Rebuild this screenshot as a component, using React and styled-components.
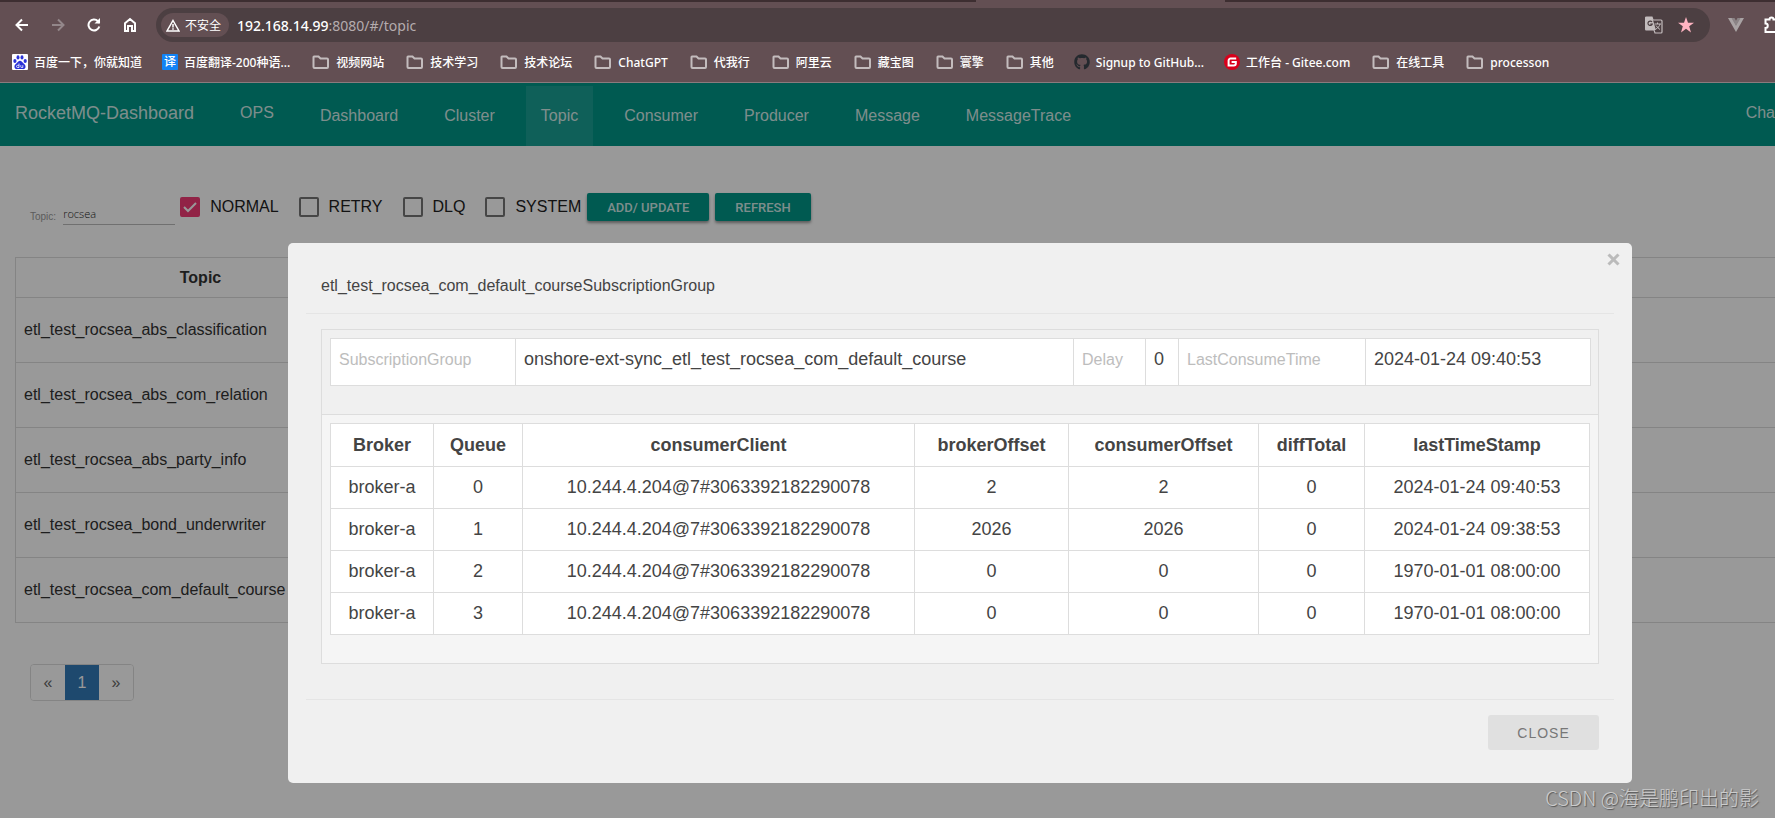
import React, { useState } from 'react';
import styled, { createGlobalStyle } from 'styled-components';
import { FaGithub } from 'react-icons/fa';

const bookmarks = [
  { label: '百度一下，你就知道', icon: 'baidu' },
  { label: '百度翻译-200种语...', icon: 'fanyi' },
  { label: '视频网站', icon: 'folder' },
  { label: '技术学习', icon: 'folder' },
  { label: '技术论坛', icon: 'folder' },
  { label: 'ChatGPT', icon: 'folder' },
  { label: '代我行', icon: 'folder' },
  { label: '阿里云', icon: 'folder' },
  { label: '藏宝图', icon: 'folder' },
  { label: '寰擎', icon: 'folder' },
  { label: '其他', icon: 'folder' },
  { label: 'Signup to GitHub...', icon: 'github' },
  { label: '工作台 - Gitee.com', icon: 'gitee' },
  { label: '在线工具', icon: 'folder' },
  { label: 'processon', icon: 'folder' },
];

const navItems = ['Dashboard', 'Cluster', 'Topic', 'Consumer', 'Producer', 'Message', 'MessageTrace'];

const filterNames = ['NORMAL', 'RETRY', 'DLQ', 'SYSTEM'];

const topics = [
  'etl_test_rocsea_abs_classification',
  'etl_test_rocsea_abs_com_relation',
  'etl_test_rocsea_abs_party_info',
  'etl_test_rocsea_bond_underwriter',
  'etl_test_rocsea_com_default_course',
];

const columns = [
  { name: 'Broker', width: 103 },
  { name: 'Queue', width: 89 },
  { name: 'consumerClient', width: 392 },
  { name: 'brokerOffset', width: 154 },
  { name: 'consumerOffset', width: 190 },
  { name: 'diffTotal', width: 106 },
  { name: 'lastTimeStamp', width: 225 },
];

const queues = [
  ['broker-a', '0', '10.244.4.204@7#3063392182290078', '2', '2', '0', '2024-01-24 09:40:53'],
  ['broker-a', '1', '10.244.4.204@7#3063392182290078', '2026', '2026', '0', '2024-01-24 09:38:53'],
  ['broker-a', '2', '10.244.4.204@7#3063392182290078', '0', '0', '0', '1970-01-01 08:00:00'],
  ['broker-a', '3', '10.244.4.204@7#3063392182290078', '0', '0', '0', '1970-01-01 08:00:00'],
];

const BookmarkIcon = ({ type }) => {
  if (type === 'folder') {
    return (
      <svg width="20" height="16" viewBox="0 0 20 16" fill="none" stroke="#c3bcbd" strokeWidth="2">
        <path d="M4 2.5h4.5l2 2H17a1 1 0 0 1 1 1V13a1 1 0 0 1-1 1H4.500a1 1 0 0 1-1-1V3a.5.5 0 0 1 .5-.5z" />
      </svg>
    );
  }
  if (type === 'baidu') {
    return (
      <svg width="16" height="16" viewBox="0 0 16 16">
        <rect width="16" height="16" rx="1" fill="#fff" />
        <g fill="#2b32d8">
          <ellipse cx="2.900" cy="7" rx="1.600" ry="2.100" />
          <ellipse cx="6" cy="3.400" rx="1.500" ry="2.100" />
          <ellipse cx="10" cy="3.400" rx="1.500" ry="2.100" />
          <ellipse cx="13.200" cy="7" rx="1.600" ry="2.100" />
          <path d="M8 6.800c1.600 0 2.300 1.500 3.600 2.800 1.400 1.200 2.200 2 1.900 3.700-.3 1.600-1.800 2.100-3.300 1.800-1.500-.3-2.900-.3-4.400 0-1.500.3-3-.2-3.300-1.800-.3-1.700.5-2.500 1.900-3.700C5.700 8.300 6.400 6.800 8 6.800z" />
        </g>
        <path d="M7 9.500v4H5.600a1 1 0 0 1 0-2.200H7M8.800 11.200v1.600c0 .5.200.7.700.7h1.300v-2.300" fill="none" stroke="#fff" strokeWidth=".8" />
      </svg>
    );
  }
  if (type === 'fanyi') {
    return <FanyiIcon>译</FanyiIcon>;
  }
  if (type === 'github') {
    return <FaGithub size={16} color="#24292e" />;
  }
  return (
    <svg width="16" height="16" viewBox="0 0 16 16">
      <circle cx="8" cy="8" r="8" fill="#d8001b" />
      <path d="M12.200 4.600H6.600a2 2 0 0 0-2 2v4.800h5.200a2 2 0 0 0 2-2V8H7.600" fill="none" stroke="#fff" strokeWidth="2" />
    </svg>
  );
};

const BrowserBar = () => (
  <Browser>
    <TabStrip>
      <ActiveTab />
      <NextTab />
    </TabStrip>
    <AddressRow>
      <IconButton aria-label="Back">
        <svg width="14" height="14" viewBox="0 0 14 14" fill="none" stroke="#fff" strokeWidth="2">
          <path d="M13 7H2M7 1.500L1.500 7 7 12.500" />
        </svg>
      </IconButton>
      <IconButton aria-label="Forward">
        <svg width="14" height="14" viewBox="0 0 14 14" fill="none" stroke="#93878a" strokeWidth="2">
          <path d="M1 7h11M7 1.500L12.500 7 7 12.500" />
        </svg>
      </IconButton>
      <IconButton aria-label="Reload">
        <svg width="14" height="14" viewBox="0 0 14 14" fill="none" stroke="#fff" strokeWidth="2">
          <path d="M12.300 8.500A5.500 5.500 0 1 1 11 3.200L12.500 4.800" />
          <path d="M13 0v5.500H7.500z" fill="#fff" stroke="none" />
        </svg>
      </IconButton>
      <IconButton aria-label="Home">
        <svg width="14" height="16" viewBox="0 0 14 16" fill="none" stroke="#fff" strokeWidth="2">
          <path d="M2 6.200L7 2l5 4.200V14H9V9H5v5H2z" />
        </svg>
      </IconButton>
      <AddressBar>
        <SecurityChip>
          <svg width="14" height="13" viewBox="0 0 14 13" fill="none" stroke="#fff" strokeWidth="1.500">
            <path d="M7 1.500L13 12H1z" />
            <path d="M7 5v3.500M7 9.300v1.500" />
          </svg>
          不安全
        </SecurityChip>
        <Url>
          <b>192.168.14.99</b>:8080/#/topic
        </Url>
        <AddressActions>
          <svg width="18" height="18" viewBox="0 0 18 18">
            <path d="M1.500 1H7l1 3h8a1 1 0 0 1 1 1v11a1 1 0 0 1-1 1h-6l-1-3H1.500a1 1 0 0 1-1-1V2a1 1 0 0 1 1-1z" fill="none" stroke="#c3bcbd" strokeWidth="1.200" />
            <path d="M1 1h6l4 13H1z" fill="#c3bcbd" />
            <path d="M7 6a2.200 2.200 0 1 0 .2 2.200H5.300" fill="none" stroke="#4c3f42" strokeWidth="1.200" />
            <path d="M9.500 8H16M12.500 6.500V8M15 8c-.5 2-2 4-4 5M11 9.500c1 1.500 2.500 3 4 4" fill="none" stroke="#c3bcbd" />
          </svg>
          <svg width="16" height="16" viewBox="0 0 16 16">
            <path d="M8 0l2 5.700h6l-4.800 3.600L13 15.500l-5-3.700-5 3.700 1.800-6.200L0 5.700h6z" fill="#ffb3c1" />
          </svg>
        </AddressActions>
      </AddressBar>
      <Extensions>
        <svg width="16" height="14" viewBox="0 0 16 14">
          <path d="M0 0h4l4 7 4-7h4L8 14z" fill="#a9a3a4" />
          <path d="M3.500 0H6.500L8 2.700 9.500 0h3L8 8z" fill="#8b8486" />
        </svg>
        <svg width="11" height="18" viewBox="0 0 11 18" fill="none" stroke="#fff" strokeWidth="2">
          <path d="M12 3.500H9.500a2 2 0 0 0-4 0H1.500V7.500a2.200 2.200 0 0 1 0 4.500v4H12" />
        </svg>
      </Extensions>
    </AddressRow>
    <Bookmarks>
      {bookmarks.map(({ label, icon }) => (
        <Bookmark key={label} href="#">
          <BookmarkIcon type={icon} />
          {label}
        </Bookmark>
      ))}
    </Bookmarks>
  </Browser>
);

const TopicFilters = () => {
  const [keyword, setKeyword] = useState('rocsea');
  const [checked, setChecked] = useState({ NORMAL: true });

  const handleToggle = (e) => {
    const { name, checked: value } = e.target;
    setChecked({ ...checked, [name]: value });
  };

  return (
    <Filters>
      <SearchLabel htmlFor="topic-search">Topic:</SearchLabel>
      <SearchInput id="topic-search" value={keyword} onChange={(e) => setKeyword(e.target.value)} />
      <CheckList>
        {filterNames.map((name) => (
          <CheckLabel key={name}>
            <Checkbox type="checkbox" name={name} checked={!!checked[name]} onChange={handleToggle} />
            {name}
          </CheckLabel>
        ))}
      </CheckList>
      <RaisedButton>ADD/ UPDATE</RaisedButton>
      <RaisedButton>REFRESH</RaisedButton>
    </Filters>
  );
};

const ConsumerDialog = () => (
  <Dialog role="dialog" aria-labelledby="dialog-title">
    <DialogX aria-label="Close dialog">
      <svg width="13" height="13" viewBox="0 0 13 13" stroke="#bbb" strokeWidth="3">
        <path d="M1.500 1.500l10 10M11.500 1.500l-10 10" />
      </svg>
    </DialogX>
    <DialogTitle id="dialog-title">etl_test_rocsea_com_default_courseSubscriptionGroup</DialogTitle>
    <DialogBody>
      <Group>
        <DataTable>
          <colgroup>
            <Col $width={185} />
            <Col $width={558} />
            <Col $width={72} />
            <Col $width={33} />
            <Col $width={187} />
            <Col $width={225} />
          </colgroup>
          <tbody>
            <tr>
              <InfoName scope="row">SubscriptionGroup</InfoName>
              <InfoValue>onshore-ext-sync_etl_test_rocsea_com_default_course</InfoValue>
              <InfoName scope="row">Delay</InfoName>
              <InfoValue>0</InfoValue>
              <InfoName scope="row">LastConsumeTime</InfoName>
              <InfoValue>2024-01-24 09:40:53</InfoValue>
            </tr>
          </tbody>
        </DataTable>
      </Group>
      <Group $striped>
        <DataTable>
          <colgroup>
            {columns.map(({ name, width }) => (
              <Col key={name} $width={width} />
            ))}
          </colgroup>
          <thead>
            <tr>
              {columns.map(({ name }) => (
                <HeadCell key={name}>{name}</HeadCell>
              ))}
            </tr>
          </thead>
          <tbody>
            {queues.map((row) => (
              <tr key={row[1]}>
                {row.map((value, i) => (
                  <DataCell key={columns[i].name}>{value}</DataCell>
                ))}
              </tr>
            ))}
          </tbody>
        </DataTable>
      </Group>
    </DialogBody>
    <DialogFooter>
      <CloseButton>CLOSE</CloseButton>
    </DialogFooter>
  </Dialog>
);

const App = () => (
  <>
    <GlobalStyle />
    <Window>
      <BrowserBar />
      <Page>
        <Navbar>
          <Brand href="#">RocketMQ-Dashboard</Brand>
          <PlainLink href="#">OPS</PlainLink>
          <NavList>
            {navItems.map((name) => (
              <NavLink key={name} href="#" $active={name === 'Topic'}>
                {name}
              </NavLink>
            ))}
          </NavList>
          <LanguageLink href="#">Cha</LanguageLink>
        </Navbar>
        <Content>
          <TopicFilters />
          <TopicTable>
            <thead>
              <tr>
                <th>Topic</th>
                <th aria-label="Operation" />
              </tr>
            </thead>
            <tbody>
              {topics.map((topic) => (
                <tr key={topic}>
                  <td>{topic}</td>
                  <td />
                </tr>
              ))}
            </tbody>
          </TopicTable>
          <Pagination aria-label="Pages">
            <PageLink href="#">«</PageLink>
            <PageLink href="#" $active>1</PageLink>
            <PageLink href="#">»</PageLink>
          </Pagination>
        </Content>
        <Overlay>
          <ConsumerDialog />
        </Overlay>
        <Watermark>CSDN @海是鹏印出的影</Watermark>
      </Page>
    </Window>
  </>
);

export default App;

const GlobalStyle = createGlobalStyle`
  * {
    box-sizing: border-box;
  }

  body {
    margin: 0;
    overflow: hidden;
    font-family: 'Liberation Sans', 'Noto Sans CJK SC', sans-serif;
    font-size: 16px;
  }

  a {
    text-decoration: none;
  }

  svg {
    flex: none;
  }
`;

const Window = styled.div`
  display: flex;
  flex-direction: column;
  min-height: 100vh;
`;

const Browser = styled.header`
  background-color: #634f53;
  border-bottom: 1px solid #8a7b7e;
  font-family: 'Noto Sans', 'Noto Sans CJK SC', sans-serif;
  color: #fff;
`;

const TabStrip = styled.div`
  display: flex;
  justify-content: space-between;
  height: 2px;
  background-color: #3d2e31;
`;

const ActiveTab = styled.div`
  width: 2px;
`;

const NextTab = styled.div`
  width: 14%;
  margin-right: 31%;
  background-color: #634f53;
`;

const AddressRow = styled.div`
  display: flex;
  align-items: center;
  height: 46px;
  padding-left: 4px;
`;

const IconButton = styled.button`
  display: flex;
  align-items: center;
  justify-content: center;
  width: 36px;
  height: 32px;
  padding: 0;
  border: none;
  background: none;
`;

const AddressBar = styled.div`
  display: flex;
  flex: 1;
  align-items: center;
  height: 34px;
  margin-left: 8px;
  padding: 0 16px 0 5px;
  border-radius: 17px;
  background-color: #4c3f42;
`;

const SecurityChip = styled.span`
  display: flex;
  align-items: center;
  gap: 5px;
  height: 24px;
  padding: 0 8px 0 5px;
  border-radius: 12px;
  background-color: #634f53;
  font-size: 12px;
`;

const Url = styled.span`
  margin-left: 8px;
  font-size: 14px;
  color: #b5acae;

  b {
    font-weight: 500;
    color: #fff;
  }
`;

const AddressActions = styled.span`
  display: flex;
  align-items: center;
  gap: 15px;
  margin-left: auto;
`;

const Extensions = styled.div`
  display: flex;
  align-items: center;
  gap: 20px;
  margin-left: 18px;
`;

const Bookmarks = styled.nav`
  display: flex;
  gap: 20px;
  height: 34px;
  padding: 0 0 6px 12px;
`;

const Bookmark = styled.a`
  display: flex;
  align-items: center;
  gap: 6px;
  font-size: 12px;
  font-weight: 500;
  white-space: nowrap;
  color: #fff;
`;

const FanyiIcon = styled.span`
  width: 16px;
  height: 16px;
  border-radius: 1px;
  background-color: #1283f5;
  font-size: 12px;
  line-height: 16px;
  text-align: center;
`;

const Page = styled.main`
  position: relative;
  flex: 1;
  overflow: hidden;
  background-color: #fff;
`;

const Navbar = styled.nav`
  display: flex;
  height: 63px;
  padding: 3px 0 0 15px;
  overflow: hidden;
  background-color: #009688;
`;

const Brand = styled.a`
  font-size: 18px;
  line-height: 54px;
  color: rgba(255, 255, 255, 0.84);
`;

const PlainLink = styled.a`
  margin-left: 46px;
  line-height: 54px;
  color: rgba(255, 255, 255, 0.84);
`;

const NavList = styled.div`
  display: flex;
  gap: 16px;
  margin-left: 31px;
`;

const NavLink = styled.a`
  padding: 0 15px;
  line-height: 60px;
  color: rgba(255, 255, 255, 0.84);
  background-color: ${({ $active }) => ($active ? 'rgba(255, 255, 255, 0.1)' : 'transparent')};
`;

const LanguageLink = styled(PlainLink)`
  margin-left: auto;
`;

const Content = styled.div`
  padding: 47px 0 0 15px;
`;

const Filters = styled.div`
  display: flex;
  align-items: center;
  height: 28px;
  margin-bottom: 36px;
  padding-left: 15px;
`;

const SearchLabel = styled.label`
  padding-top: 18px;
  font-size: 10px;
  color: #999;
`;

const SearchInput = styled.input`
  width: 112px;
  height: 22px;
  margin: 14px 5px 0 7px;
  padding: 0;
  border: none;
  border-bottom: 1px solid #bbb;
  background: none;
  font-family: 'Open Sans', sans-serif;
  font-size: 11px;
  font-weight: 300;
  color: #222;
`;

const CheckList = styled.div`
  display: flex;
  gap: 20px;
  margin-right: 6px;
`;

const CheckLabel = styled.label`
  display: flex;
  align-items: center;
  gap: 10px;
  line-height: 20px;
  color: #212121;
`;

const Checkbox = styled.input`
  width: 20px;
  height: 20px;
  margin: 0;
  appearance: none;
  border: 2px solid #757575;
  border-radius: 2px;

  &:checked {
    border-color: #f23b76;
    background: #f23b76
      url("data:image/svg+xml,%3Csvg xmlns='http://www.w3.org/2000/svg' viewBox='0 0 16 16'%3E%3Cpath d='M2 8l4 4L14 4' fill='none' stroke='white' stroke-width='2'/%3E%3C/svg%3E");
  }
`;

const RaisedButton = styled.button`
  height: 28px;
  margin-right: 6px;
  padding: 0 20px;
  border: none;
  border-radius: 2px;
  background-color: #009688;
  box-shadow: 0 2px 3px rgba(0, 0, 0, 0.4);
  font-family: Roboto, sans-serif;
  font-size: 13px;
  font-weight: 500;
  color: rgba(255, 255, 255, 0.84);
`;

const TopicTable = styled.table`
  width: 100%;
  border-collapse: collapse;
  color: #333;

  th,
  td {
    height: 65px;
    padding: 0 8px;
    border: 1px solid #ddd;
    border-right: none;
    text-align: left;
  }

  th {
    height: 40px;
    text-align: center;
  }

  th:first-child {
    width: 370px;
  }
`;

const Pagination = styled.nav`
  display: inline-flex;
  height: 37px;
  margin: 41px 0 0 15px;
  overflow: hidden;
  border: 1px solid #ddd;
  border-radius: 4px;
`;

const PageLink = styled.a`
  width: 34px;
  line-height: 35px;
  text-align: center;
  color: ${({ $active }) => ($active ? '#fff' : '#666')};
  background-color: ${({ $active }) => ($active ? '#337ab7' : '#fff')};
`;

const Overlay = styled.div`
  position: absolute;
  inset: 0;
  padding: 160px 143px 0 288px;
  background-color: rgba(0, 0, 0, 0.4);
`;

const Dialog = styled.section`
  position: relative;
  padding: 30px 18px 33px;
  border-radius: 5px;
  background-color: #f0f0f0;
  color: #444;
`;

const DialogX = styled.button`
  position: absolute;
  top: 10px;
  right: 12px;
  display: flex;
  padding: 0;
  border: none;
  background: none;
`;

const DialogTitle = styled.h4`
  margin: 0;
  padding: 0 15px 15px;
  border-bottom: 1px solid #e5e5e5;
  font-size: 16px;
  font-weight: 400;
  line-height: 25px;
`;

const DialogBody = styled.div`
  padding: 15px 15px 35px;
`;

const Group = styled.div`
  padding: 8px 8px 28px;
  border: 1px solid #ddd;
  border-top-width: ${({ $striped }) => ($striped ? '0' : '1px')};
  background-color: ${({ $striped }) => ($striped ? '#f5f5f5' : 'transparent')};
`;

const DataTable = styled.table`
  width: 100%;
  table-layout: fixed;
  border-collapse: collapse;
  background-color: #fff;
  font-size: 18px;
  line-height: 25px;
  white-space: nowrap;
`;

const Col = styled.col`
  width: ${({ $width }) => $width}px;
`;

const InfoName = styled.th`
  padding: 8px 8px 13px;
  border: 1px solid #ddd;
  font-size: 16px;
  font-weight: 400;
  text-align: left;
  color: #bdbdbd;
`;

const InfoValue = styled.td`
  padding: 8px 8px 13px;
  border: 1px solid #ddd;
`;

const HeadCell = styled.th`
  padding: 9px 8px 8px;
  border: 1px solid #ddd;
`;

const DataCell = styled.td`
  padding: 8px;
  border: 1px solid #ddd;
  text-align: center;
`;

const DialogFooter = styled.footer`
  display: flex;
  justify-content: flex-end;
  padding: 15px 15px 0;
  border-top: 1px solid #e5e5e5;
`;

const CloseButton = styled.button`
  min-width: 111px;
  height: 35px;
  border: none;
  border-radius: 3px;
  background-color: #e0e0e0;
  font-family: 'Liberation Sans', sans-serif;
  font-size: 14px;
  letter-spacing: 1px;
  color: #777;
`;

const Watermark = styled.div`
  position: absolute;
  right: 16px;
  bottom: 6px;
  font-family: 'Noto Sans CJK SC', sans-serif;
  font-size: 20px;
  font-weight: 300;
  line-height: 28px;
  color: #ccc;
  text-shadow: 1px 1px 1px #555;
`;
